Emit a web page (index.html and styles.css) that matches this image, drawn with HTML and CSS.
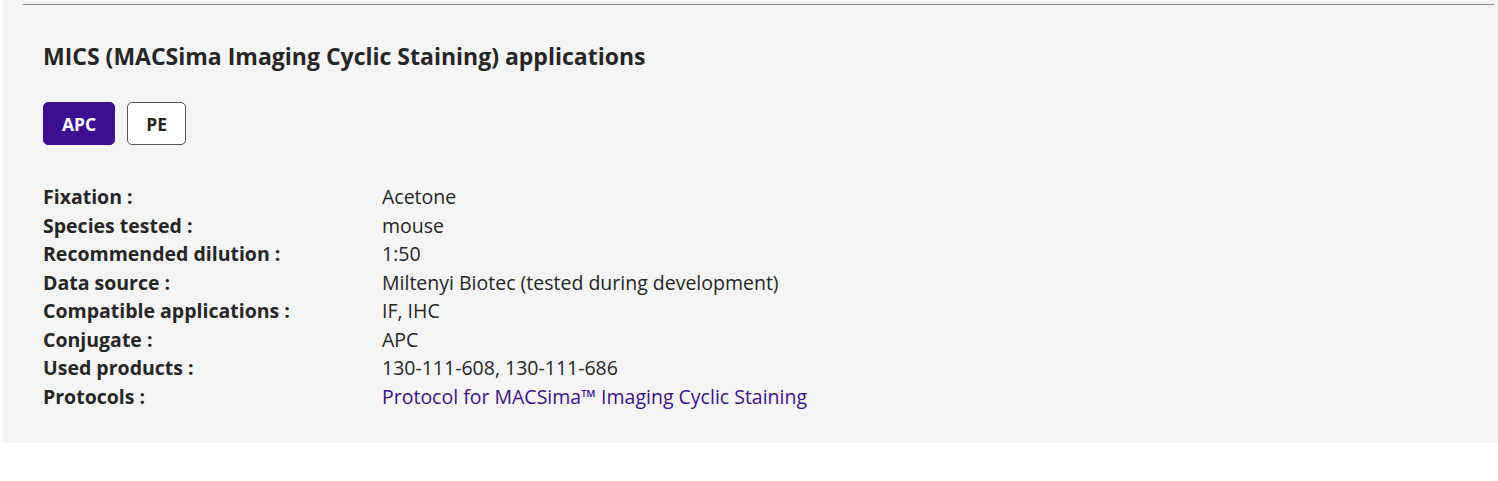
FILE: index.html
```html
<!DOCTYPE html>
<html>
<head>
<meta charset="utf-8">
<link rel="stylesheet" href="styles.css">
</head>
<body>
<div class="page">
  <section class="panel">
    <hr class="rule">
    <div class="content">
      <h2 class="title">MICS (MACSima Imaging Cyclic Staining) applications</h2>
      <div class="tabs">
        <button class="tab active">APC</button>
        <button class="tab">PE</button>
      </div>
      <dl class="specs">
        <dt>Fixation :</dt><dd>Acetone</dd>
        <dt>Species tested :</dt><dd>mouse</dd>
        <dt>Recommended dilution :</dt><dd>1:50</dd>
        <dt>Data source :</dt><dd>Miltenyi Biotec (tested during development)</dd>
        <dt>Compatible applications :</dt><dd>IF, IHC</dd>
        <dt>Conjugate :</dt><dd>APC</dd>
        <dt>Used products :</dt><dd>130-111-608, 130-111-686</dd>
        <dt>Protocols :</dt><dd><a class="link" href="#">Protocol for MACSima™ Imaging Cyclic Staining</a></dd>
      </dl>
    </div>
  </section>
</div>
</body>
</html>
```

FILE: styles.css
```css
* { box-sizing: border-box; }
html, body { margin: 0; padding: 0; background: #ffffff; }
body {
  font-family: "Open Sans", "Noto Sans", sans-serif;
  color: #262626;
}
.page {
  padding-left: 3px;
}
.panel {
  background: #f4f4f4;
  height: 443px;
  padding-top: 4px;
}
.rule {
  margin: 0 4px 0 20px;
  border: 0;
  border-top: 1px solid #8a8a8a;
  height: 0;
}
.content {
  padding: 0 40px;
}
.title {
  margin: 35px 0 0 0;
  font-size: 23px;
  line-height: 32px;
  font-weight: 700;
  color: #262626;
}
.tabs {
  display: flex;
  gap: 12px;
  margin-top: 30px;
}
.tab {
  font-family: inherit;
  font-size: 17.5px;
  font-weight: 700;
  height: 43px;
  padding: 0 18px;
  border-radius: 5px;
  border: 1px solid #555;
  background: #ffffff;
  color: #262626;
}
.tab.active {
  background: #3d1092;
  border-color: #3d1092;
  color: #ffffff;
}
.specs {
  display: grid;
  grid-template-columns: 339px 1fr;
  margin: 38px 0 0 0;
  font-size: 19.5px;
  line-height: 28.5px;
}
.specs dt {
  font-weight: 700;
  margin: 0;
}
.specs dd {
  margin: 0;
}
.link {
  color: #3c1288;
  text-decoration: none;
}
```
